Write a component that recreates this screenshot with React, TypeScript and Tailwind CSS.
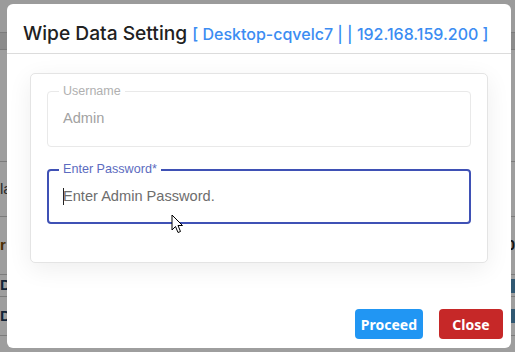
import React from "react";

const rows = [
  { h: "h-[33px]", bg: "bg-[#fafafa]", left: "", right: "" },
  { h: "h-[17px]", bg: "bg-[#e2e2e2]", left: "", right: "" },
  { h: "h-[112px]", bg: "bg-white", left: "", right: "" },
  { h: "h-[55px]", bg: "bg-white", left: "la", right: "" },
  { h: "h-[58px]", bg: "bg-white", left: "r", right: "0" },
  { h: "h-[22px]", bg: "bg-white", left: "D", right: "bar" },
  { h: "h-[39px]", bg: "bg-white", left: "D", right: "bar" },
];

function Cursor() {
  return (
    <svg width="13" height="20" viewBox="0 0 13 20" className="absolute left-[171px] top-[214px]">
      <path
        d="M1 1 L1 16 L4.5 12.5 L7 18.5 L9.5 17.5 L7 11.5 L11.5 11.5 Z"
        fill="#fff"
        stroke="#000"
        strokeWidth="1"
        strokeLinejoin="round"
      />
    </svg>
  );
}

export default function App() {
  return (
    <div className="relative w-[515px] h-[352px] overflow-hidden bg-white font-['Liberation_Sans',Arial,sans-serif]">
      {/* page behind the dialog */}
      <div className="flex flex-col">
        {rows.map((r, i) => (
          <div
            key={i}
            className={`${r.h} ${r.bg} border-b border-[#c9c9c9] flex items-center justify-between text-[15px]`}
          >
            <span className={r.left === "r" ? "text-[#7a4a00] font-bold" : r.left === "D" ? "text-[#1d3b5a] font-bold" : "text-[#444]"}>
              {r.left}
            </span>
            {r.right === "bar" ? (
              <span className="w-[6px] h-[14px] bg-[#4f8fb8]" />
            ) : (
              <span className="text-[#222] font-bold">{r.right}</span>
            )}
          </div>
        ))}
        <div className="flex-1 h-[20px] bg-[#777]" />
      </div>

      {/* overlay */}
      <div className="absolute inset-0 bg-black/[0.38]">
        <div className="absolute left-[7px] top-[4px] w-[504px] h-[344px] bg-white rounded-[6px] flex flex-col">
          {/* Header */}
          <div className="pt-[15px] pb-[5px] px-[16px] border-b border-[#dcdcdc] font-['Inter',sans-serif] text-[19.2px] leading-[28px] font-medium whitespace-nowrap">
            <span className="text-[#212121]">Wipe Data Setting</span>{" "}
            <span className="text-[#3b8cf2] text-[16px]">[ Desktop-cqvelc7 | | 192.168.159.200 ]</span>
          </div>

          {/* Body */}
          <div className="px-[23px] pt-[19px]">
            <div className="border border-[#e4e4e4] rounded-[5px] bg-white shadow-[0_6px_24px_rgba(0,0,0,0.07)] px-[16px] pt-[17px] pb-[38px] flex flex-col gap-[22px]">
              <div className="relative h-[56px] border border-[#e9e9e9] rounded-[4px] flex items-center pl-[15px]">
                <span className="absolute -top-[8px] left-[11px] px-[4px] bg-white text-[12.5px] leading-[14px] text-[#b0b0b0]">
                  Username
                </span>
                <span className="text-[14.6px] text-[#a2a2a2]">Admin</span>
              </div>
              <div className="relative h-[55px] border-2 border-[#3f51b5] rounded-[4px] flex items-center pl-[14px]">
                <span className="absolute -top-[9px] left-[10px] px-[4px] bg-white text-[12.6px] leading-[14px] text-[#5c6bc0]">
                  Enter Password*
                </span>
                <span className="w-px h-[17px] bg-[#222] -mr-px" />
                <span className="text-[14.6px] text-[#6d6d6d]">Enter Admin Password.</span>
              </div>
            </div>
          </div>

          {/* Footer */}
          <div className="mt-auto flex justify-end gap-[16px] pr-[8px] pb-[9px] font-['Noto_Sans',sans-serif]">
            <button className="h-[30px] min-w-[64px] px-[6px] rounded-[4px] bg-[#2196f3] text-white text-[14px] font-bold">
              Proceed
            </button>
            <button className="h-[30px] min-w-[64px] px-[13px] rounded-[4px] bg-[#c62828] text-white text-[14px] font-bold">
              Close
            </button>
          </div>
        </div>
        <Cursor />
      </div>
    </div>
  );
}
